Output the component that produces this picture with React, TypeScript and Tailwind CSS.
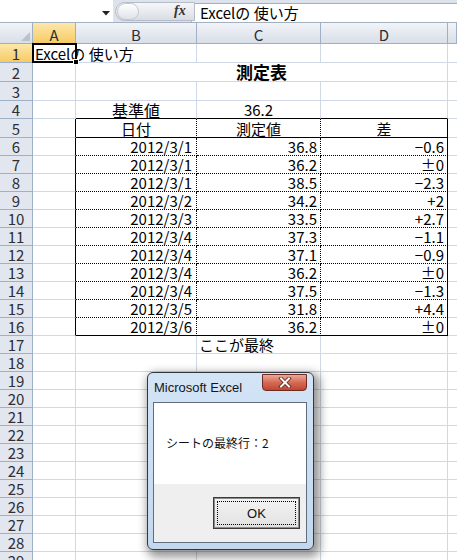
import React from "react";

type Row = [string, string, string];

const data: Row[] = [
  ["2012/3/1", "36.8", "−0.6"],
  ["2012/3/1", "36.2", "±0"],
  ["2012/3/1", "38.5", "−2.3"],
  ["2012/3/2", "34.2", "+2"],
  ["2012/3/3", "33.5", "+2.7"],
  ["2012/3/4", "37.3", "−1.1"],
  ["2012/3/4", "37.1", "−0.9"],
  ["2012/3/4", "36.2", "±0"],
  ["2012/3/4", "37.5", "−1.3"],
  ["2012/3/5", "31.8", "+4.4"],
  ["2012/3/6", "36.2", "±0"],
];

const GRID = "border-[#d0d7e5]";

function bottomFor(r: number): string {
  if (r === 4 || r === 5 || r === 16) return "border-b border-b-black";
  if (r >= 6 && r <= 15) return "border-b border-b-black [border-bottom-style:dotted]";
  return "border-b border-b-[#d0d7e5]";
}

function RowHeader({ r }: { r: number }) {
  const sel = r === 1;
  return (
    <div
      className={`w-[33px] shrink-0 border-r border-b border-[#9eb0c8] flex items-end justify-center leading-[16px] text-[15px] text-[#2a2f38] ${
        sel ? "bg-gradient-to-b from-[#fde7a8] to-[#f6cb63]" : "bg-[#e2e6ee]"
      }`}
    >
      {r}
    </div>
  );
}

function SheetRow({ r }: { r: number }) {
  const h = r <= 3 || r === 5 ? "h-[19px]" : "h-[18px]";
  const inTable = r >= 5 && r <= 16;
  const d = r >= 6 && r <= 16 ? data[r - 6] : null;
  const bb = bottomFor(r);
  const bbA = "border-b border-b-[#d0d7e5]";

  return (
    <div className={`flex ${h}`}>
      <RowHeader r={r} />
      {/* A */}
      <div
        className={`relative w-[43px] shrink-0 ${bbA} border-r ${
          inTable ? "border-r-black" : "border-r-[#d0d7e5]"
        } flex items-end leading-[16px] overflow-visible`}
      >
        {r === 1 && (
          <span className="pl-[2px] whitespace-nowrap">Excelの 使い方</span>
        )}
      </div>
      {r === 2 ? (
        <div className={`w-[372px] shrink-0 border-r ${GRID} border-b flex items-end justify-center`}>
          <span className="text-[17px] font-bold leading-[18px]">測定表</span>
        </div>
      ) : (
        <>
          {/* B */}
          <div
            className={`w-[121px] shrink-0 ${bb} border-r ${
              inTable ? "border-r-black [border-right-style:dotted]" : "border-r-[#d0d7e5]"
            } flex items-end leading-[16px] ${
              r === 4 || r === 5 ? "justify-center" : "justify-end pr-[4px]"
            }`}
          >
            {r === 4 && <span className="text-[16px] underline underline-offset-[1px]">基準値</span>}
            {r === 5 && <span>日付</span>}
            {d && <span>{d[0]}</span>}
          </div>
          {/* C */}
          <div
            className={`w-[124px] shrink-0 ${bb} border-r ${
              inTable ? "border-r-black [border-right-style:dotted]" : "border-r-[#d0d7e5]"
            } flex items-end leading-[16px] ${
              r === 4 || r === 5 ? "justify-center" : r === 17 ? "justify-start pl-[2px]" : "justify-end pr-[3px]"
            }`}
          >
            {r === 4 && <span>36.2</span>}
            {r === 5 && <span>測定値</span>}
            {d && <span>{d[1]}</span>}
            {r === 17 && <span className="whitespace-nowrap">ここが最終</span>}
          </div>
          {/* D */}
          <div
            className={`w-[127px] shrink-0 ${bb} border-r ${
              inTable ? "border-r-black" : "border-r-[#d0d7e5]"
            } flex items-end leading-[16px] ${r === 5 ? "justify-center" : "justify-end pr-[3px]"}`}
          >
            {r === 5 && <span>差</span>}
            {d && <span>{d[2]}</span>}
          </div>
        </>
      )}
      {/* E */}
      <div className="flex-1 border-b border-b-[#d0d7e5]" />
    </div>
  );
}

function ColumnHeaders() {
  const base =
    "shrink-0 border-r border-b border-[#9eb0c8] flex items-end justify-center leading-[17px] text-[15px] text-[#2a2f38]";
  const normal = "bg-gradient-to-b from-[#f1f4f8] to-[#d9dfe8]";
  return (
    <div className="flex h-[21px]">
      <div className={`relative w-[33px] ${base} ${normal}`}>
        <svg className="absolute right-[2px] bottom-[2px]" width="9" height="9" viewBox="0 0 9 9">
          <polygon points="9,0 9,9 0,9" fill="#b9c3cf" />
        </svg>
      </div>
      <div className={`w-[43px] ${base} bg-gradient-to-b from-[#fde7a8] to-[#f6cb63]`}>A</div>
      <div className={`w-[121px] ${base} ${normal}`}>B</div>
      <div className={`w-[124px] ${base} ${normal}`}>C</div>
      <div className={`w-[127px] ${base} ${normal}`}>D</div>
      <div className={`flex-1 ${base} ${normal}`} />
    </div>
  );
}

function FormulaBar() {
  return (
    <div className="flex h-[23px] bg-[#dce3ed] border-b border-[#a4b0c0]">
      <div className="relative w-[113px] shrink-0 bg-white">
        <svg className="absolute left-[102px] top-[11px]" width="8" height="5" viewBox="0 0 8 5">
          <polygon points="0,0 8,0 4,4.5" fill="#222" />
        </svg>
      </div>
      <div className="relative w-[78px] shrink-0">
        <div className="absolute left-[2px] top-[2px] h-[19px] w-[80px] rounded-l-full border border-[#b5bcc7] bg-gradient-to-b from-[#f6f7f9] to-[#d9dde3]" />
        <div className="absolute left-[4px] top-[3px] h-[17px] w-[22px] rounded-full border border-[#c3c8d0] bg-gradient-to-b from-[#ffffff] to-[#dfe2e7]" />
        <span className="absolute left-[61px] top-[2px] font-['Liberation_Serif',serif] italic font-bold text-[14px] leading-[18px] text-[#333]">
          fx
        </span>
      </div>
      <div className="flex-1 mt-[3px] bg-white border-l border-t border-[#a7afba] pl-[8px] flex items-center leading-[16px] whitespace-nowrap">
        Excelの 使い方
      </div>
    </div>
  );
}

function Dialog() {
  return (
    <div className="absolute left-[147px] top-[372px] w-[167px] h-[178px] rounded-[6px] border border-[#2f3742] bg-gradient-to-b from-[#d3e4f6] to-[#c3d8ef] shadow-[3px_4px_10px_3px_rgba(0,0,0,0.42)]">
      <div className="relative h-[29px] flex items-center pl-[6px]">
        <span className="font-['Liberation_Sans',sans-serif] text-[13px] text-[#161616] leading-[16px]">
          Microsoft Excel
        </span>
        <div className="absolute right-[6px] top-[1px] w-[45px] h-[17px] rounded-b-[4px] border border-[#6b2a22] bg-gradient-to-b from-[#eaa895] via-[#d56a55] to-[#c24432] flex items-center justify-center">
          <svg width="14" height="11" viewBox="0 0 14 11">
            <path d="M3 1.5 L11 9.5 M11 1.5 L3 9.5" stroke="#5a2019" strokeWidth="3.6" strokeLinecap="square" />
            <path d="M3 1.5 L11 9.5 M11 1.5 L3 9.5" stroke="#ffffff" strokeWidth="2" strokeLinecap="square" />
          </svg>
        </div>
      </div>
      <div className="ml-[5px] w-[154px] h-[141px] border border-[#5f6d7d] flex flex-col bg-white">
        <div className="h-[81px] flex items-center pl-[12px] pb-[2px] text-[12px] leading-[14px] text-[#111] whitespace-nowrap">
          シートの最終行：2
        </div>
        <div className="flex-1 bg-[#efefef] flex justify-end items-start pt-[13px] pr-[6px]">
          <div className="relative w-[87px] h-[32px] border border-[#3a3a3a] shadow-[inset_0_0_0_1px_#8d8d8d] bg-gradient-to-b from-[#f3f3f3] to-[#e2e2e2] flex items-center justify-center">
            <div className="absolute inset-[3px] border border-dotted border-black" />
            <span className="font-['Liberation_Sans',sans-serif] text-[13px] leading-[15px] text-[#111]">OK</span>
          </div>
        </div>
      </div>
    </div>
  );
}

export default function App() {
  const rows = Array.from({ length: 29 }, (_, i) => i + 1);
  return (
    <div className="relative w-[457px] h-[560px] overflow-hidden bg-white text-black text-[15px] font-['Noto_Sans_CJK_JP','Noto_Sans',sans-serif]">
      <FormulaBar />
      <div className="relative">
        <ColumnHeaders />
        {rows.map((r) => (
          <SheetRow key={r} r={r} />
        ))}
        {/* selection box around A1 */}
        <div className="absolute left-[32px] top-[20px] w-[45px] h-[20px] border-2 border-black pointer-events-none" />
        <div className="absolute left-[73px] top-[36px] w-[6px] h-[6px] bg-black border border-white pointer-events-none" />
      </div>
      <Dialog />
    </div>
  );
}
